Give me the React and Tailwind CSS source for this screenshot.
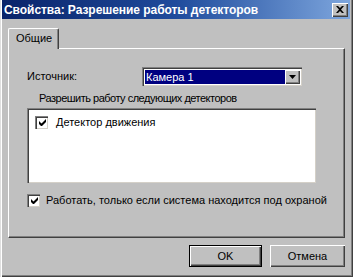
import React from "react";

const font = { fontFamily: '"Liberation Sans", Arial, sans-serif' };

// Win2000 style checkbox
const CheckBox = () => (
  <div className="w-[13px] h-[13px] bg-white border-t border-l border-[#808080] border-r-white border-b-white shadow-[inset_1px_1px_#404040,inset_-1px_-1px_#d4d0c8] flex items-center justify-center shrink-0">
    <svg width="7" height="7" viewBox="0 0 7 7">
      <path d="M0 2v3l2 2h1l4-4V0L2.5 4.5z" fill="#000" />
    </svg>
  </div>
);

const Button = ({ children, isDefault, w }) => (
  <div
    className={`${w} h-[22px] ${isDefault ? "border border-black" : ""} bg-[#c0c0c0]`}
  >
    <div className="w-full h-full flex items-center justify-center text-[11px] text-black shadow-[inset_1px_1px_#fff,inset_-1px_-1px_#404040,inset_-2px_-2px_#808080]">
      {children}
    </div>
  </div>
);

export default function App() {
  return (
    <div
      style={font}
      className="w-[353px] h-[277px] bg-[#c0c0c0] flex flex-col pl-[2px] pr-[3px] pb-[2px] shadow-[inset_1px_0_#dfdfdf,inset_2px_0_#fff,inset_-1px_-1px_#404040,inset_-2px_-2px_#808080] overflow-hidden"
    >
      {/* TITLE BAR */}
      <div className="h-[19px] shrink-0 flex items-center justify-between pl-[2px] pr-[2px] bg-gradient-to-r from-[#0a246a] via-[#1f4b9c] to-[#7ea6dd]">
        <span className="text-white font-bold text-[12px] leading-none whitespace-nowrap tracking-[-0.05px]">
          Свойства: Разрешение работы детекторов
        </span>
        <div className="w-[16px] h-[14px] bg-[#c0c0c0] shadow-[inset_1px_1px_#fff,inset_-1px_-1px_#404040,inset_-2px_-2px_#808080] flex items-center justify-center">
          <svg width="8" height="7" viewBox="0 0 8 7">
            <path
              d="M0 0h2l2 2 2-2h2L5 3.5 8 7H6L4 5 2 7H0l3-3.5z"
              fill="#000"
            />
          </svg>
        </div>
      </div>

      {/* TAB + PANEL */}
      <div className="flex flex-col pt-[9px] pl-[6px] pr-[5px]">
        <div className="relative z-10 w-[51px] h-[21px] -mb-[1px] bg-[#c0c0c0] border-l border-t border-white border-r border-r-[#404040] rounded-tl-[2px] rounded-tr-[2px] shadow-[inset_-1px_0_#808080] flex items-center pl-[7px] pb-[1px] text-[11px] text-black">
          Общие
        </div>
        <div className="h-[190px] border-l border-t border-white border-r border-b border-r-[#404040] border-b-[#404040] shadow-[inset_-1px_-1px_#808080] flex flex-col pl-[18px] pt-[18px] text-[11px] text-black whitespace-nowrap">
          {/* Source */}
          <div className="flex items-center">
            <span className="w-[115px]">Источник:</span>
            <div className="w-[160px] h-[19px] bg-white border-t border-l border-[#808080] border-r-white border-b-white shadow-[inset_1px_1px_#404040,inset_-1px_-1px_#d4d0c8] flex p-[2px]">
              <div className="flex-1 bg-[#000080] text-white leading-none flex items-center pl-[1px]">
                Камера 1
              </div>
              <div className="w-[15px] h-full bg-[#c0c0c0] shadow-[inset_1px_1px_#fff,inset_-1px_-1px_#404040,inset_-2px_-2px_#808080] flex items-center justify-center">
                <svg width="7" height="4" viewBox="0 0 7 4">
                  <path d="M0 0h7L3.5 4z" fill="#000" />
                </svg>
              </div>
            </div>
          </div>

          <div className="mt-[5px] pl-[12px] leading-[14px] tracking-[-0.5px]">
            Разрешить работу следующих детекторов
          </div>

          {/* Detector list */}
          <div className="mt-[3px] w-[289px] h-[75px] bg-white border-t border-l border-[#808080] border-r-white border-b-white shadow-[inset_1px_1px_#404040,inset_-1px_-1px_#d4d0c8] pl-[7px] pt-[5px]">
            <div className="flex items-center gap-[8px]">
              <CheckBox />
              <span>Детектор движения</span>
            </div>
          </div>

          <div className="mt-[9px] flex items-center gap-[6px]">
            <CheckBox />
            <span>Работать, только если система находится под охраной</span>
          </div>
        </div>
      </div>

      {/* BUTTONS */}
      <div className="mt-[7px] flex justify-end gap-[8px] pr-[5px]">
        <Button isDefault w="w-[73px]">
          OK
        </Button>
        <Button w="w-[75px]">Отмена</Button>
      </div>
    </div>
  );
}
